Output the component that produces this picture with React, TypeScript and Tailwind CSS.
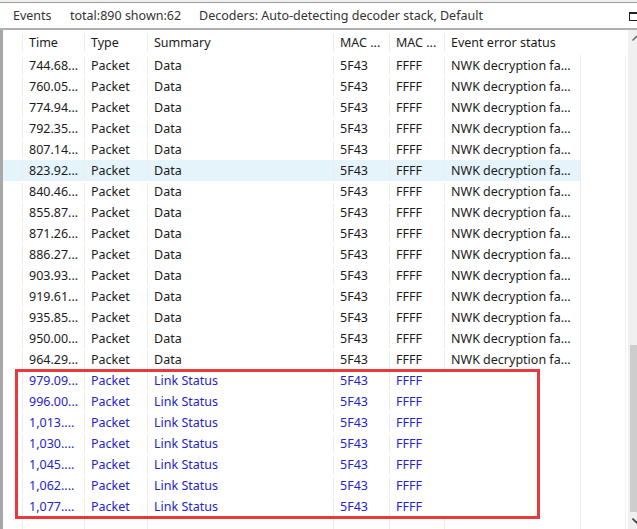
/* ------------------------------------------------------------------ */
/*  Event list data                                                    */
/* ------------------------------------------------------------------ */

type Row = { time: string; summary: string; status: string; link?: boolean }

const dataTimes = [
  '744.68...', '760.05...', '774.94...', '792.35...', '807.14...',
  '823.92...', '840.46...', '855.87...', '871.26...', '886.27...',
  '903.93...', '919.61...', '935.85...', '950.00...', '964.29...',
]

const linkTimes = [
  '979.09...', '996.00...', '1,013....', '1,030....', '1,045....', '1,062....', '1,077....',
]

const rows: Row[] = [
  ...dataTimes.map((time) => ({ time, summary: 'Data', status: 'NWK decryption fa...' })),
  ...linkTimes.map((time) => ({ time, summary: 'Link Status', status: '', link: true })),
]

const HIGHLIGHT = '823.92...'

/* ------------------------------------------------------------------ */
/*  Table pieces                                                       */
/* ------------------------------------------------------------------ */

const cell = 'shrink-0 border-l border-[#ececec] pl-[6px] whitespace-nowrap overflow-hidden'

function Cells({ time, type, summary, mac1, mac2, status }: { time: string; type: string; summary: string; mac1: string; mac2: string; status: string }) {
  return (
    <>
      <div className="w-[19px] shrink-0" />
      <div className={`${cell} w-[62px]`}>{time}</div>
      <div className={`${cell} w-[63px]`}>{type}</div>
      <div className={`${cell} w-[186px]`}>{summary}</div>
      <div className={`${cell} w-[56px]`}>{mac1}</div>
      <div className={`${cell} w-[55px]`}>{mac2}</div>
      <div className={`${cell} w-[136px]`}>{status}</div>
    </>
  )
}

function Filler() {
  return (
    <>
      <div className="w-[2px] shrink-0 border-l border-[#ececec]" />
      <div className="w-[43px] shrink-0" />
      <div className="w-[3px] shrink-0 border-l border-[#f2f2f2]" />
    </>
  )
}

/* ------------------------------------------------------------------ */
/*  Scrollbar (clipped by the window edge)                             */
/* ------------------------------------------------------------------ */

function Scrollbar() {
  return (
    <div className="flex w-[17px] shrink-0 flex-col bg-[#f0f0f0]">
      <div className="flex h-[17px] items-center justify-center">
        <svg width="9" height="6" viewBox="0 0 9 6" fill="none" stroke="#606060" strokeWidth="1.4">
          <polyline points="0.5 5.5 4.5 1.5 8.5 5.5" />
        </svg>
      </div>
      <div className="h-[302px]" />
      <div className="mx-[2px] h-[169px] bg-[#cdcdcd]" />
      <div className="flex h-[17px] items-center justify-center">
        <svg width="9" height="6" viewBox="0 0 9 6" fill="none" stroke="#404040" strokeWidth="1.6">
          <polyline points="0.5 0.5 4.5 4.5 8.5 0.5" />
        </svg>
      </div>
    </div>
  )
}

/* ------------------------------------------------------------------ */
/*  Root App                                                           */
/* ------------------------------------------------------------------ */

export default function App() {
  return (
    <div
      className="relative flex h-[529px] w-[637px] flex-col overflow-hidden bg-white text-[12.5px] text-[#1b1b1b]"
      style={{ fontFamily: '"Noto Sans", "Open Sans", sans-serif' }}
    >
      {/* Title bar */}
      <div className="h-[2px] shrink-0 bg-[#f0f0f0]" />
      <div className="h-px shrink-0 bg-[#a0a0a0]" />
      <div className="flex h-[25px] shrink-0 items-center pt-[2px] text-[#333]">
        <span className="w-[70px] shrink-0 pl-[13px]">Events</span>
        <span className="w-[129px] shrink-0">total:890 shown:62</span>
        <span className="flex-1 whitespace-nowrap">Decoders: Auto-detecting decoder stack, Default</span>
        <div className="mr-[-3px] h-[9px] w-[11px] shrink-0 border border-t-2 border-[#222]" />
      </div>
      <div className="h-[2px] shrink-0 bg-[#b0b0b0]" />

      {/* Body */}
      <div className="flex min-h-0 flex-1">
        <div className="w-[3px] shrink-0 bg-[#a8a8a8]" />

        <div className="flex w-[625px] shrink-0 flex-col">
          <div className="flex h-[25px] shrink-0 items-center pt-[1px]">
            <Cells time="Time" type="Type" summary="Summary" mac1="MAC ..." mac2="MAC ..." status="Event error status" />
            <Filler />
          </div>

          {rows.map((r) => (
            <div key={r.time} className="flex h-[21px] shrink-0 items-center">
              <div
                className={`flex h-full w-[577px] shrink-0 items-center pt-[1px] ${r.time === HIGHLIGHT ? 'bg-[#e5f3fb]' : ''} ${r.link ? 'text-[#2424cc]' : ''}`}
              >
                <Cells time={r.time} type="Packet" summary={r.summary} mac1="5F43" mac2="FFFF" status={r.status} />
              </div>
              <div className="flex h-full items-stretch">
                <Filler />
              </div>
            </div>
          ))}

          <div className="flex flex-1 items-stretch">
            <div className="flex w-[577px] shrink-0 items-stretch">
              <Cells time="" type="" summary="" mac1="" mac2="" status="" />
            </div>
            <Filler />
          </div>
        </div>

        <Scrollbar />
      </div>

      {/* Red annotation box */}
      <div className="pointer-events-none absolute left-[15px] top-[369px] h-[150px] w-[525px] border-[3px] border-[#e8393f]" />
    </div>
  )
}
